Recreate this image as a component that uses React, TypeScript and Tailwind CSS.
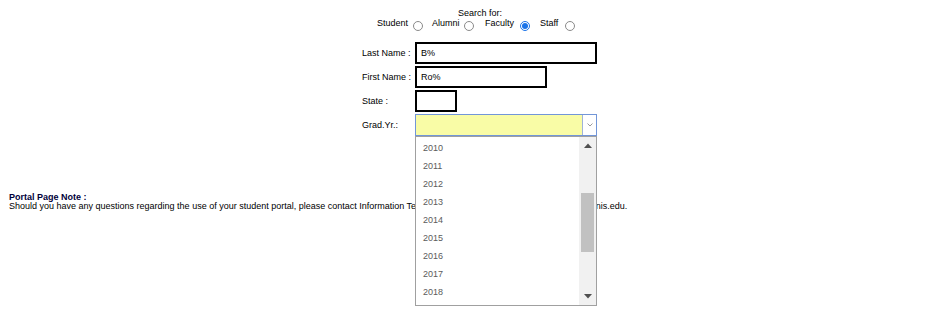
import React from "react";

const years = ["2010", "2011", "2012", "2013", "2014", "2015", "2016", "2017", "2018"];

function Radio({ checked = false }: { checked?: boolean }) {
  if (checked) {
    return (
      <span className="mt-[3px] flex h-[10px] w-[10px] items-center justify-center rounded-full border border-[#1a73e8] bg-white">
        <span className="block h-[6px] w-[6px] rounded-full bg-[#1a73e8]" />
      </span>
    );
  }
  return <span className="mt-[3px] block h-[10px] w-[10px] rounded-full border border-[#8a8a8a] bg-white" />;
}

export default function App() {
  return (
    <div className="relative h-[318px] w-[936px] overflow-hidden bg-white pt-[8px] font-['Liberation_Sans',Arial,sans-serif] text-[9px] leading-[10px] text-black">
      {/* Search for header */}
      <div className="pl-[458px]">Search for:</div>

      {/* Radio row */}
      <div className="ml-[377px] flex h-[14px] items-start">
        <span className="w-[31px]">Student</span>
        <span className="ml-[5px]">
          <Radio />
        </span>
        <span className="ml-[9px] w-[28px]">Alumni</span>
        <span className="ml-[4px]">
          <Radio />
        </span>
        <span className="ml-[11px] w-[29px]">Faculty</span>
        <span className="ml-[6px]">
          <Radio checked />
        </span>
        <span className="ml-[10px] w-[19px]">Staff</span>
        <span className="ml-[6px]">
          <Radio />
        </span>
      </div>

      {/* Form */}
      <div className="ml-[362px] mt-[10px] flex flex-col gap-[2px]">
        <div className="flex h-[22px] items-center">
          <span className="w-[53px]">Last Name :</span>
          <div className="flex h-[22px] w-[182px] items-center border-2 border-black pl-[4px]">B%</div>
        </div>
        <div className="flex h-[22px] items-center">
          <span className="w-[53px]">First Name :</span>
          <div className="flex h-[22px] w-[132px] items-center border-2 border-black pl-[4px]">Ro%</div>
        </div>
        <div className="flex h-[22px] items-center">
          <span className="w-[53px]">State :</span>
          <div className="h-[22px] w-[42px] border-2 border-black" />
        </div>
        <div className="flex h-[22px] items-center">
          <span className="w-[53px]">Grad.Yr.:</span>
          <div className="relative h-[22px] w-[182px]">
            <div className="flex h-full w-full border border-[#7296d8]">
              <div className="flex-1 bg-[#f9fca6]" />
              <div className="flex w-[14px] items-center justify-center border-l border-[#9fb3da] bg-white">
                <svg width="6" height="4" viewBox="0 0 6 4">
                  <polyline points="0.5,0.5 3,3 5.5,0.5" fill="none" stroke="#9a9a9a" strokeWidth="1" />
                </svg>
              </div>
            </div>

            {/* Open dropdown list */}
            <div className="absolute left-0 top-full z-10 flex h-[170px] w-[182px] border border-[#a0a0a0] bg-white">
              <ul className="flex-1 pt-[2px]">
                {years.map((y) => (
                  <li key={y} className="h-[18px] pl-[7px] leading-[18px] text-[#5b5b5b]">
                    {y}
                  </li>
                ))}
              </ul>
              <div className="flex w-[17px] flex-col bg-[#f1f1f1]">
                <div className="flex h-[17px] items-center justify-center">
                  <svg width="8" height="5" viewBox="0 0 8 5">
                    <polygon points="0,5 4,0.5 8,5" fill="#505050" />
                  </svg>
                </div>
                <div className="flex-1 px-[2px]">
                  <div className="mt-[39px] h-[59px] bg-[#c1c1c1]" />
                </div>
                <div className="flex h-[17px] items-center justify-center">
                  <svg width="8" height="5" viewBox="0 0 8 5">
                    <polygon points="0,0 8,0 4,4.5" fill="#505050" />
                  </svg>
                </div>
              </div>
            </div>
          </div>
        </div>
      </div>

      {/* Portal note */}
      <div className="ml-[9px] mt-[57px] leading-[9px]">
        <div className="font-bold text-[#00003a]">Portal Page Note :</div>
        <div>
          Should you have any questions regarding the use of your student portal, please contact Information
          Technology Services (ITS) at ithelpdesk@stdennis.edu.
        </div>
      </div>
    </div>
  );
}
